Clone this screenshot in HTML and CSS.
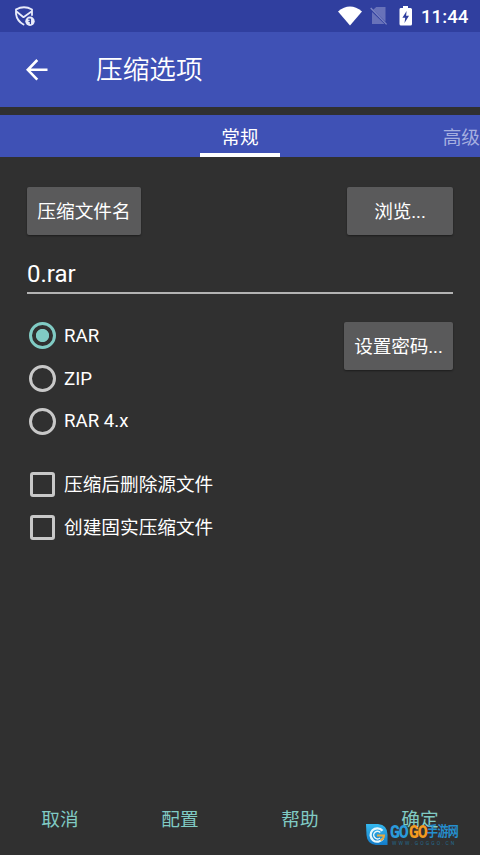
FILE: index.html
```html
<!DOCTYPE html>
<html lang="zh-CN">
<head>
<meta charset="utf-8">
<title>压缩选项</title>
<link rel="stylesheet" href="styles.css">
</head>
<body>
<div class="screen">
  <header class="status">
    <svg class="shield" width="22" height="24" viewBox="0 0 22 24" fill="none" stroke="#e8ebfa" stroke-width="1.8" stroke-linejoin="round" stroke-linecap="round">
      <path d="M2 5.5Q10 1 18 5.5V11M2 5.5V10Q3 17 9.5 20.5M2.5 7.5L9.5 13.2L17.5 7.5"/>
      <circle cx="16" cy="17.3" r="4.7" fill="#e8ebfa" stroke="none"/>
      <path d="M14.8 15.2h1.6v4.4M15 17.3h1.4" stroke="#303f9f" stroke-width="1.3"/>
    </svg>
    <div class="status-icons">
      <svg width="24" height="20" viewBox="0 0 24 20"><path fill="#fff" d="M0 5.4Q12-4.3 24 5.4L12 19.5Z"/></svg>
      <svg width="18" height="20" viewBox="0 0 18 20"><path fill="#6872b9" d="M6.2 1H15.5V15.7L3.2 3.7ZM2 6L14.5 18H2Z"/><path d="M.7 2L16.6 18.4" stroke="#7e87c4" stroke-width="1.3"/></svg>
      <svg width="14" height="20" viewBox="0 0 14 20"><path fill="#fff" d="M1.5 2H4V0H9V2H11.5Q13 2 13 3.5V18Q13 19.5 11.5 19.5H2Q.5 19.5.5 18V3.5Q.5 2 1.5 2Z"/><path fill="#303f9f" d="M7.6 5L3.4 11.8H6.2L5.5 17L10 9.8H7.1Z"/></svg>
      <span class="clock">11:44</span>
    </div>
  </header>
  <div class="toolbar">
    <svg width="22" height="22" viewBox="0 0 22 22" fill="none" stroke="#fff" stroke-width="2.6"><path d="M11.3 1L1.8 10.8L11.3 20.6M2 10.8H21.5"/></svg>
    <h1>压缩选项</h1>
  </div>
  <nav class="tabs">
    <span class="tab active">常规</span>
    <span class="tab next">高级</span>
  </nav>
  <main class="content">
    <div class="row">
      <button class="btn name">压缩文件名</button>
      <button class="btn browse">浏览...</button>
    </div>
    <div class="field">0.rar</div>
    <div class="row formats">
      <div class="options">
        <div class="option"><span class="radio checked"></span>RAR</div>
        <div class="option"><span class="radio"></span>ZIP</div>
        <div class="option"><span class="radio"></span>RAR 4.x</div>
      </div>
      <button class="btn password">设置密码...</button>
    </div>
    <div class="options checks">
      <div class="option"><span class="box"></span>压缩后删除源文件</div>
      <div class="option"><span class="box"></span>创建固实压缩文件</div>
    </div>
  </main>
  <footer class="actions">
    <span>取消</span><span>配置</span><span>帮助</span><span>确定</span>
  </footer>
  <div class="watermark">
    <svg width="22" height="22" viewBox="0 0 22 22">
      <defs><linearGradient id="drop" x2="0" y2="1"><stop stop-color="#35b9ef"/><stop offset="1" stop-color="#137bc8"/></linearGradient></defs>
      <path fill="url(#drop)" d="M0 0H12Q21.5 1 21.5 10.5V21H10Q1 20 .5 11Z"/>
      <path d="M16.5 6.8A6.7 6.7 0 1 0 17 14.5" fill="none" stroke="#e6f7fc" stroke-width="2.3"/>
      <path d="M14.3 8.5A3.8 3.8 0 1 0 14 14" fill="none" stroke="#e6f7fc" stroke-width="1.5"/>
      <path d="M11 11.5H18Q17.8 15 14.5 16.2" fill="none" stroke="#e6aa42" stroke-width="2"/>
    </svg>
    <div class="brand">
      <div class="brand-name"><b class="blue">GO</b><b class="orange">GO</b><strong>手游网</strong></div>
      <div class="url">WWW.GOGGO.CN</div>
    </div>
  </div>
</div>
</body>
</html>
```
FILE: styles.css
```css
* { box-sizing: border-box; }
body {
  margin: 0;
  background: #303030;
  color: #fff;
  font-family: Roboto, "Noto Sans CJK SC", sans-serif;
  font-size: 18.67px;
}
.screen {
  position: relative;
  display: flex;
  flex-direction: column;
  height: 855px;
  overflow: hidden;
}
svg { display: block; flex: none; }
.status {
  display: flex;
  justify-content: space-between;
  height: 32px;
  padding: 4px 11px 0 14px;
  background: #303f9f;
}
.status-icons { display: flex; padding-top: 2px; }
.status-icons svg:nth-child(2) { margin-left: 8px; }
.status-icons svg:nth-child(3) { margin-left: 11px; }
.clock {
  width: 48px;
  margin-left: 8px;
  font-size: 18.67px;
  font-weight: 500;
  line-height: 22px;
  white-space: nowrap;
}
.toolbar {
  display: flex;
  align-items: center;
  height: 75px;
  padding-left: 26px;
  background: #3f51b5;
}
.toolbar h1 {
  margin: 0 0 0 48px;
  padding-top: 1px;
  font-size: 26.67px;
  font-weight: 350;
  line-height: 37px;
}
.tabs {
  display: grid;
  grid-template-columns: 200px 80px 1fr;
  grid-template-rows: 42px;
  height: 42px;
  margin-top: 8px;
  background: #3f51b5;
  line-height: 47px;
}
.active {
  grid-column: 2;
  height: 42px;
  text-align: center;
  border-bottom: 4px solid #fff;
}
.next { text-align: right; color: #a6afe0; }
.content { flex: 1; padding: 30px 27px 0; }
.row { display: flex; justify-content: space-between; }
.btn {
  height: 48px;
  padding: 2px 0 0;
  border: 0;
  border-radius: 2px;
  background: #5a5a5b;
  box-shadow: 0 1px 2px #0006;
  color: #fff;
  font: inherit;
  line-height: 46px;
}
.name { width: 114px; }
.browse { width: 106px; }
.password { width: 109px; margin-top: 8px; }
.browse, .password { letter-spacing: -.15px; }
.field {
  height: 43px;
  margin-top: 16px;
  padding-top: 8px;
  border-bottom: 2px solid #b3b3b3;
  font-size: 24px;
  line-height: 30px;
}
.formats { height: 149px; margin-top: 20px; }
.option {
  display: flex;
  align-items: center;
  gap: 8px;
  height: 42.7px;
  padding: 1px 0 0 2px;
  line-height: 28px;
}
.radio {
  width: 27px;
  height: 27px;
  border: 3px solid #c8c8c8;
  border-radius: 50%;
}
.checked {
  border-color: #80cbc4;
  background: radial-gradient(circle, #80cbc4 6.2px, transparent 7px);
}
.box {
  width: 25px;
  height: 25px;
  margin: 0 1px;
  border: 3px solid #c8c8c8;
  border-radius: 3px;
}
.actions {
  display: grid;
  grid-template-columns: repeat(4, 1fr);
  height: 72px;
  color: #80cbc4;
  text-align: center;
  line-height: 74px;
}
.watermark {
  position: absolute;
  left: 366px;
  top: 824px;
  display: flex;
  gap: 2px;
}
.brand-name {
  display: flex;
  align-items: center;
  height: 16px;
  line-height: 16px;
}
.brand-name b {
  width: 18.5px;
  font-family: "Roboto", sans-serif;
  font-size: 19px;
  font-weight: 900;
  letter-spacing: -1.5px;
  transform: scaleX(.76);
  transform-origin: left;
}
.blue { color: #2a9bdc; }
.orange { color: #f49a20; }
.brand-name strong {
  font-size: 11px;
  font-weight: 700;
  color: #258fce;
  letter-spacing: -.6px;
  transform: scaleY(1.2);
}
.url {
  padding-left: 2px;
  color: #24698f;
  font-size: 5px;
  line-height: 6px;
  letter-spacing: 2.1px;
  white-space: nowrap;
}
```
